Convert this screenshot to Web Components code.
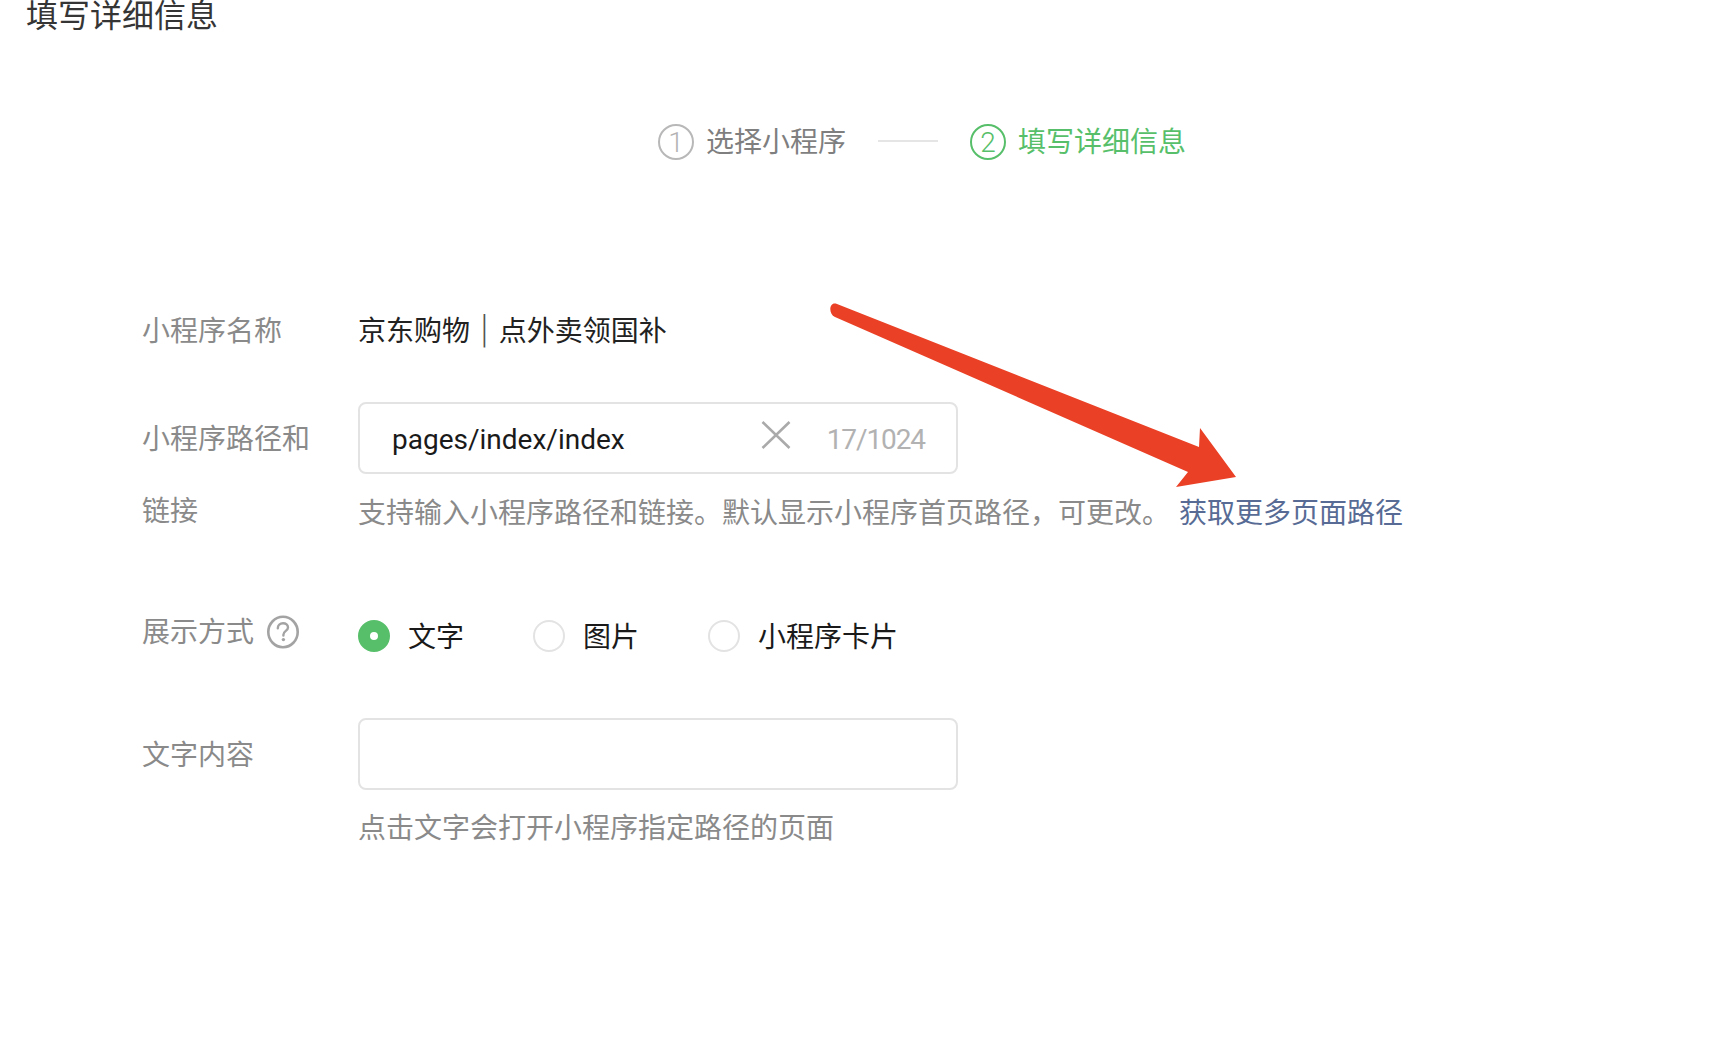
<!DOCTYPE html>
<html lang="zh-CN">
<head>
<meta charset="utf-8">
<title>填写详细信息</title>
<style>
    html, body {
        margin: 0;
        padding: 0;
        background: #fff;
    }
    body {
        position: relative;
        width: 1712px;
        height: 1044px;
        overflow: hidden;
        font-family: Roboto, "Noto Sans CJK SC", sans-serif;
        font-size: 28px;
        color: #222;
    }
    .value { line-height: 72px; display: block; padding-top: 2px; }
    .bar { font-family: Inter, sans-serif; line-height: 0; color: #555; font-weight: 300; padding: 0 10px; }
    .link { color: #576b95; margin-left: 9px; }
</style>
</head>
<body>
<page-title>填写详细信息</page-title>
<step-bar></step-bar>

<form-row label="小程序名称" style="margin-top: 134px;">
    <span class="value">京东购物<span class="bar">|</span>点外卖领国补</span>
</form-row>

<form-row label="小程序路径和链接" style="margin-top: 34px;">
    <text-box value="pages/index/index" counter="17/1024" clearable></text-box>
    <form-hint style="margin-top: 4px;">支持输入小程序路径和链接。默认显示小程序首页路径，可更改。<span class="link">获取更多页面路径</span></form-hint>
</form-row>

<form-row label="展示方式" help style="margin-top: 50px; --label-nudge: -3px;">
    <radio-group>
        <radio-item checked>文字</radio-item>
        <radio-item>图片</radio-item>
        <radio-item>小程序卡片</radio-item>
    </radio-group>
</form-row>

<form-row label="文字内容" style="margin-top: 46px;">
    <text-box></text-box>
    <form-hint style="margin-top: 3px;">点击文字会打开小程序指定路径的页面</form-hint>
</form-row>

<red-arrow></red-arrow>

<script>
class PageTitle extends HTMLElement {
    constructor() {
        super();
        this.attachShadow({ mode: 'open' }).innerHTML = `
            <style>
                :host {
                    display: block;
                    padding-left: 26px;
                    height: 30px;
                    font-size: 32px;
                    line-height: 32px;
                    color: #353535;
                }
            </style>
            <slot></slot>`;
    }
}

class StepBar extends HTMLElement {
    constructor() {
        super();
        this.attachShadow({ mode: 'open' }).innerHTML = `
            <style>
                :host {
                    display: flex;
                    align-items: center;
                    height: 36px;
                    margin-top: 94px;
                    padding-left: 658px;
                    color: #7f7f7f;
                }
                .num {
                    box-sizing: border-box;
                    width: 36px;
                    height: 36px;
                    border: 2px solid #b8b8b8;
                    border-radius: 50%;
                    display: flex;
                    align-items: center;
                    justify-content: center;
                    font-weight: 300;
                    color: #b2b2b2;
                    margin-right: 12px;
                }
                .line {
                    width: 60px;
                    height: 2px;
                    background: #e5e5e5;
                    margin: 0 32px 2px;
                }
                .on { color: #57bf6a; }
                .on .num { border-color: #57bf6a; color: #57bf6a; }
                .step { display: flex; align-items: center; }
                .txt { padding-bottom: 4px; }
            </style>
            <div class="step"><span class="num">1</span><span class="txt">选择小程序</span></div>
            <div class="line"></div>
            <div class="step on"><span class="num">2</span><span class="txt">填写详细信息</span></div>`;
    }
}

class FormRow extends HTMLElement {
    constructor() {
        super();
        const label = this.getAttribute('label');
        const help = this.hasAttribute('help') ? `<svg class="help" width="32" height="34" viewBox="0 0 32 34" fill="none"><ellipse cx="16" cy="17" rx="14.7" ry="15.2" stroke="#a3a3a3" stroke-width="2.6"/><path d="M10.8 13.2c0-3 2.3-4.9 5.2-4.9s5 1.8 5 4.2c0 3.4-4.6 3.5-4.6 7.2v.8" stroke="#a3a3a3" stroke-width="2.4" stroke-linecap="round"/><circle cx="16.4" cy="24.6" r="1.7" fill="#a3a3a3"/></svg>` : '';
        this.attachShadow({ mode: 'open' }).innerHTML = `
            <style>
                :host {
                    display: flex;
                    padding-left: 142px;
                }
                .label {
                    width: 216px;
                    flex: none;
                    box-sizing: border-box;
                    padding-right: 40px;
                    margin-top: var(--label-nudge, 2px);
                    line-height: 72px;
                    color: #8a8a8a;
                }
                .help { vertical-align: -7px; margin-left: 13px; }
                .control { flex: 1; min-width: 0; }
            </style>
            <div class="label">${label}${help}</div>
            <div class="control"><slot></slot></div>`;
    }
}

class TextBox extends HTMLElement {
    constructor() {
        super();
        const value = this.getAttribute('value') || '';
        const counter = this.getAttribute('counter');
        const clear = this.hasAttribute('clearable') ? `
            <svg class="clear" width="30" height="28" viewBox="0 0 30 28" fill="none">
                <path d="M1.5 1 28.5 27M28.5 1 1.5 27" stroke="#aaa" stroke-width="2.6"/>
            </svg>` : '';
        this.attachShadow({ mode: 'open' }).innerHTML = `
            <style>
                :host {
                    display: flex;
                    align-items: center;
                    box-sizing: border-box;
                    width: 600px;
                    height: 72px;
                    border: 2px solid #e3e3e3;
                    border-radius: 8px;
                    padding: 0 31px 0 32px;
                    color: #1a1a1a;
                }
                .value { flex: 1; padding-top: 2px; }
                .clear { margin: -6px 36px 0 0; }
                .count { color: #b2b2b2; padding-top: 2px; letter-spacing: -1.1px; }
            </style>
            <span class="value">${value}</span>${clear}${counter ? `<span class="count">${counter}</span>` : ''}`;
    }
}

class FormHint extends HTMLElement {
    constructor() {
        super();
        this.attachShadow({ mode: 'open' }).innerHTML = `
            <style>
                :host {
                    display: block;
                    white-space: nowrap;
                    line-height: 72px;
                    color: #8a8a8a;
                }
            </style>
            <slot></slot>`;
    }
}

class RadioGroup extends HTMLElement {
    constructor() {
        super();
        this.attachShadow({ mode: 'open' }).innerHTML = `
            <style>
                :host {
                    display: flex;
                    align-items: center;
                    height: 72px;
                    gap: 69px;
                }
            </style>
            <slot></slot>`;
    }
}

class RadioItem extends HTMLElement {
    constructor() {
        super();
        const on = this.hasAttribute('checked');
        this.attachShadow({ mode: 'open' }).innerHTML = `
            <style>
                :host {
                    display: flex;
                    align-items: center;
                    gap: 18px;
                    color: #1a1a1a;
                }
                .dot {
                    box-sizing: border-box;
                    width: 32px;
                    height: 32px;
                    border-radius: 50%;
                    border: 2px solid #e3e3e3;
                }
                .dot.on {
                    border: 12px solid #57bf6a;
                    background: #fff;
                }
                .txt { padding-bottom: 2px; }
            </style>
            <span class="dot ${on ? 'on' : ''}"></span><span class="txt"><slot></slot></span>`;
    }
}

// annotation drawn over the form, its place on the page is the content
class RedArrow extends HTMLElement {
    constructor() {
        super();
        this.attachShadow({ mode: 'open' }).innerHTML = `
            <style>
                :host { position: absolute; left: 0; top: 0; pointer-events: none; }
                svg { display: block; }
            </style>
            <svg width="1712" height="1044" viewBox="0 0 1712 1044">
                <path d="M837 304 1199 447 1200 428 1236 477 1176 487 1188 472 835 317C828 314 829 301 837 304Z" fill="#ea4025"/>
            </svg>`;
    }
}

customElements.define('page-title', PageTitle);
customElements.define('step-bar', StepBar);
customElements.define('form-row', FormRow);
customElements.define('text-box', TextBox);
customElements.define('form-hint', FormHint);
customElements.define('radio-group', RadioGroup);
customElements.define('radio-item', RadioItem);
customElements.define('red-arrow', RedArrow);
</script>
</body>
</html>
